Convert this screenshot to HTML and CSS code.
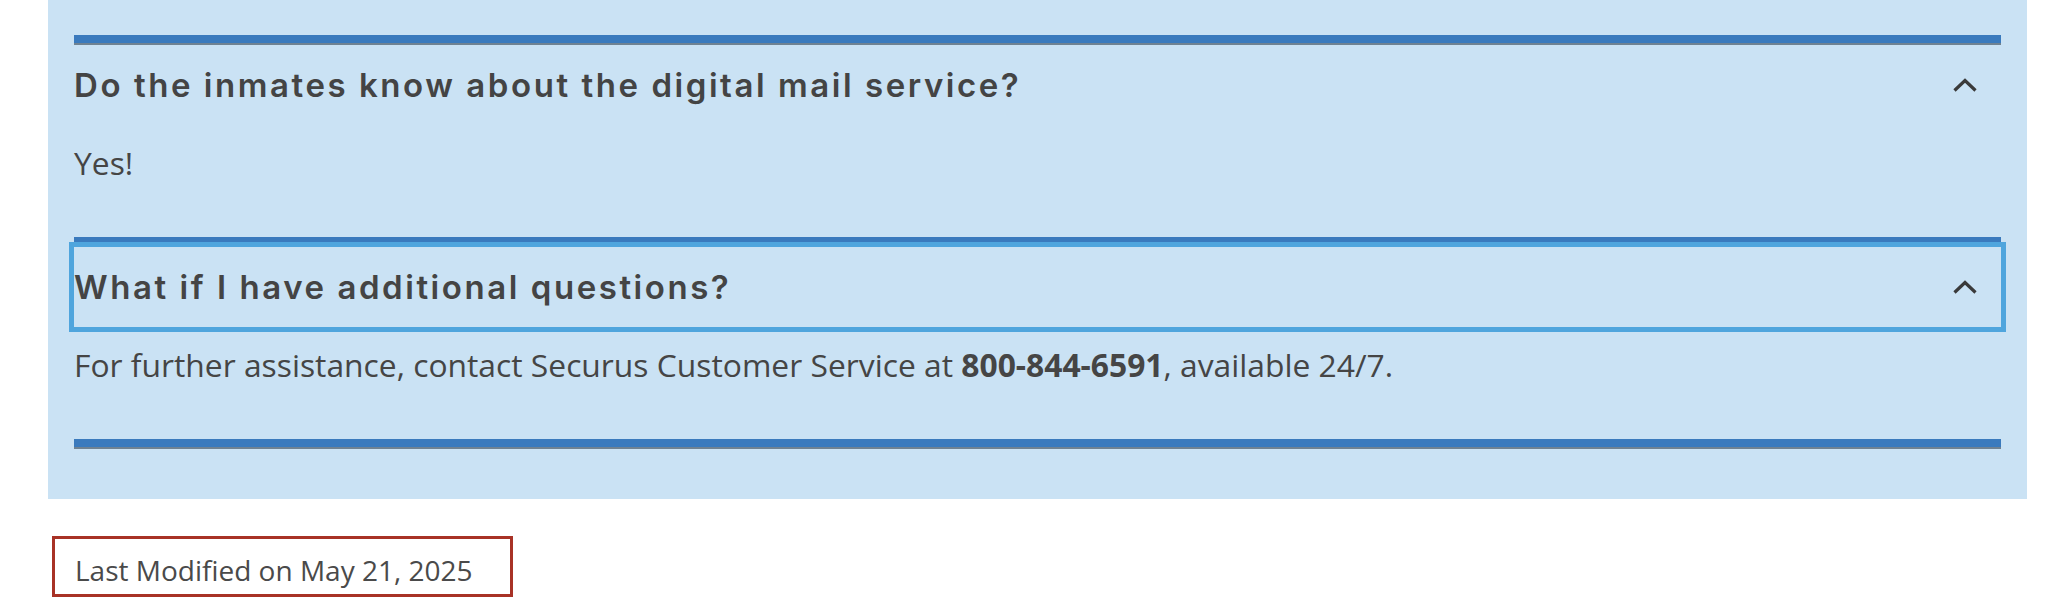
FILE: index.html
```html
<!DOCTYPE html>
<html lang="en">
<head>
<meta charset="utf-8">
<title>FAQ</title>
<link rel="stylesheet" href="styles.css">
</head>
<body>
<main class="page">
  <section class="faq">
    <div class="item">
      <div class="bar"></div>
      <div class="q">
        <h3 class="q-title">Do the inmates know about the digital mail service?</h3>
        <svg class="chev" width="26" height="16" viewBox="0 0 26 16"><polyline points="2.5,13.5 13,3.5 23.5,13.5" fill="none" stroke="currentColor" stroke-width="3.2"/></svg>
      </div>
      <div class="a"><p>Yes!</p></div>
    </div>
    <div class="item">
      <div class="bar"></div>
      <div class="q q-focus">
        <h3 class="q-title">What if I have additional questions?</h3>
        <svg class="chev" width="26" height="16" viewBox="0 0 26 16"><polyline points="2.5,13.5 13,3.5 23.5,13.5" fill="none" stroke="currentColor" stroke-width="3.2"/></svg>
      </div>
      <div class="a"><p>For further assistance, contact Securus Customer Service at <strong>800-844-6591</strong>, available 24/7.</p></div>
    </div>
    <div class="bar"></div>
  </section>
  <div class="modified">Last Modified on May 21, 2025</div>
</main>
</body>
</html>
```
FILE: styles.css
```css
html, body {
  margin: 0;
  padding: 0;
  background: #ffffff;
}
.page {
  padding-left: 48px;
  font-family: "Open Sans", "Noto Sans", sans-serif;
  color: #454545;
}
.faq {
  width: 1979px;
  box-sizing: border-box;
  background: #cae2f4;
  padding: 35px 26px 50px 26px;
}
.bar {
  height: 8px;
  background: #3a7abd;
  border-bottom: 2px solid #6f8292;
}
.q {
  height: 80px;
  display: flex;
  align-items: center;
  justify-content: space-between;
  padding-right: 23px;
}
.q-focus {
  outline: 5px solid #4fa5dd;
  position: relative;
}
.q-title {
  margin: 0;
  font-family: Inter, "Noto Sans", sans-serif;
  font-weight: 600;
  font-size: 33px;
  color: #444444;
  letter-spacing: 2.55px;
}
.chev {
  color: #3a3a3a;
  display: block;
}
.a {
  padding: 14px 0 50px;
}
.a p {
  margin: 0;
  font-size: 31.8px;
  line-height: 48px;
}
.a strong {
  font-weight: 700;
}
.modified {
  display: inline-block;
  margin: 37px 0 0 4px;
  border: 3px solid #a83226;
  padding: 12px 37px 5px 20px;
  font-size: 28px;
  line-height: 38px;
  color: #4a4a4a;
}
```
